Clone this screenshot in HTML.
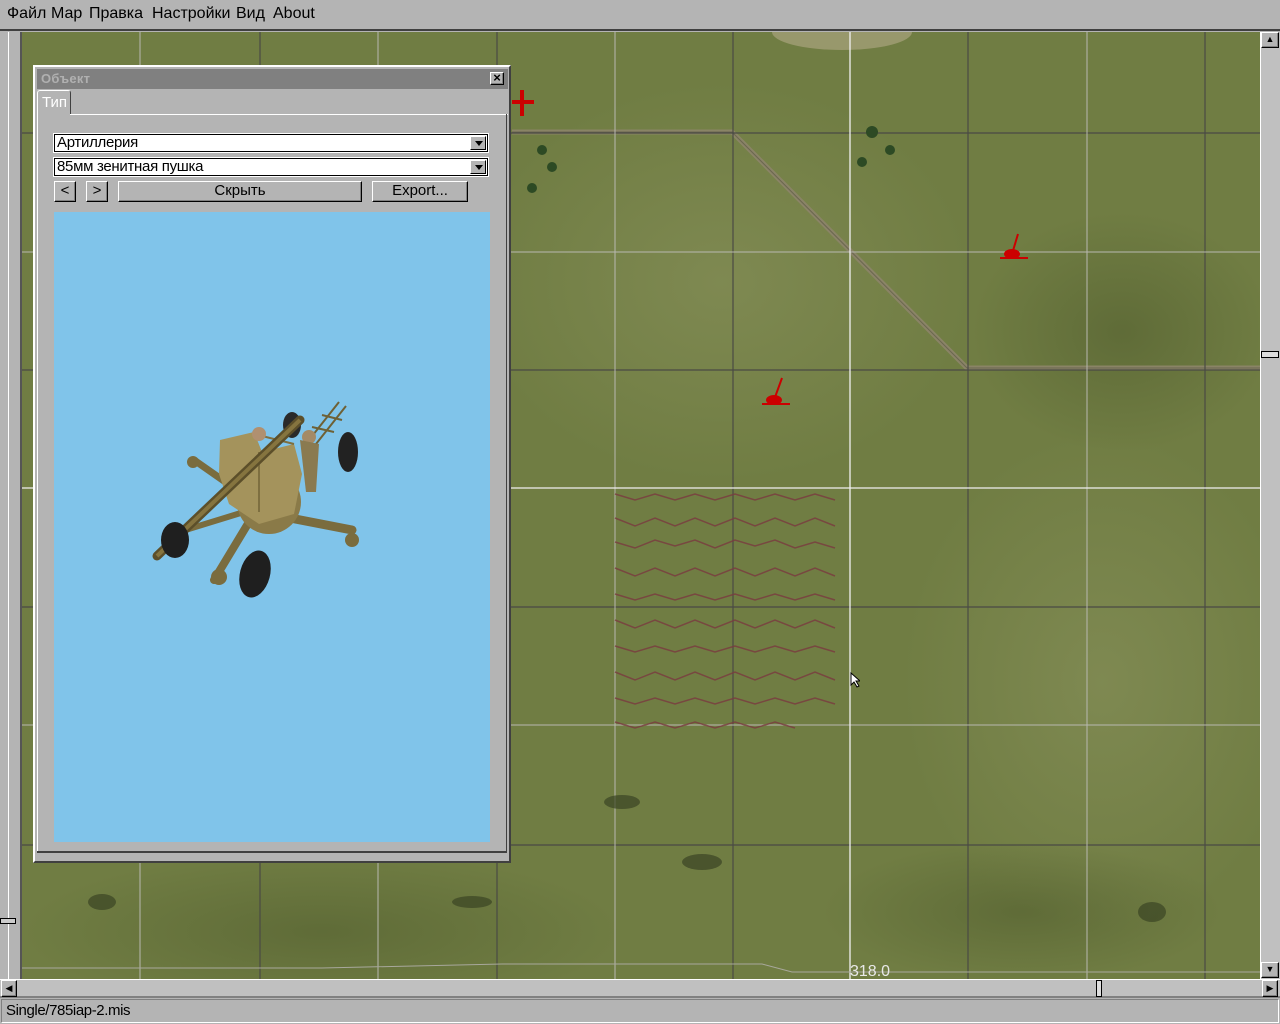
<!DOCTYPE html>
<html><head><meta charset="utf-8"><style>
*{margin:0;padding:0;box-sizing:border-box}
body{width:1280px;height:1024px;overflow:hidden;background:#b4b4b4;font-family:"Liberation Sans",sans-serif;position:relative}
.abs{position:absolute}
.menu{left:0;top:0;width:1280px;height:31px;background:#b4b4b4;border-bottom:2px solid #404040;font-size:16px;color:#000}
.menu span{position:absolute;top:5px}
.map{left:22px;top:32px;width:1239px;height:948px;background:#6f7c42;overflow:hidden}
.btn{background:#b4b4b4;border:1px solid;border-color:#fff #000 #000 #fff;box-shadow:inset -1px -1px 0 #808080;font-size:15px;text-align:center;line-height:17px;color:#000}
.combo{background:#fff;border:1px solid #000;box-shadow:0 0 0 1px #fff;font-size:15px;line-height:16px;padding-left:2px;letter-spacing:-0.3px}
.arr{position:absolute;right:1px;top:1px;width:16px;height:14px;background:#b4b4b4;border:1px solid;border-color:#fff #000 #000 #fff}
.arr:after{content:"";position:absolute;left:4px;top:4px;border-left:4px solid transparent;border-right:4px solid transparent;border-top:5px solid #000}
</style></head><body>
<div class="abs menu"><span style="left:7px">Файл</span><span style="left:51px">Мар</span><span style="left:89px">Правка</span><span style="left:152px">Настройки</span><span style="left:236px">Вид</span><span style="left:273px">About</span></div>
<div class="abs" style="left:8px;top:32px;width:1px;height:950px;background:#fff"></div>
<div class="abs" style="left:20px;top:32px;width:2px;height:950px;background:#555"></div>
<div class="abs" style="left:0;top:918px;width:16px;height:6px;border:1px solid #000;background:#ccc"></div>
<div class="abs map">
<svg width="1239" height="948" style="position:absolute;left:0;top:0">
<defs>
<radialGradient id="g1"><stop offset="0" stop-color="#8d9560" stop-opacity=".5"/><stop offset="1" stop-color="#8d9560" stop-opacity="0"/></radialGradient>
<radialGradient id="g2"><stop offset="0" stop-color="#4e5a2c" stop-opacity=".5"/><stop offset="1" stop-color="#4e5a2c" stop-opacity="0"/></radialGradient>
</defs>
<rect width="1239" height="948" fill="#707d43"/>
<ellipse cx="820" cy="0" rx="70" ry="18" fill="#a9a47e" opacity=".7"/>
<ellipse cx="700" cy="250" rx="250" ry="200" fill="url(#g1)"/>
<ellipse cx="1080" cy="650" rx="200" ry="250" fill="url(#g1)"/>
<ellipse cx="300" cy="900" rx="300" ry="80" fill="url(#g2)"/>
<ellipse cx="1100" cy="300" rx="150" ry="120" fill="url(#g2)"/>
<ellipse cx="1000" cy="880" rx="200" ry="70" fill="url(#g2)"/>
<path d="M490 100 H710 L945 336 H1239" stroke="#8a8466" stroke-width="5" fill="none"/>
<path d="M490 100 H710 L945 336 H1239" stroke="#6b6650" stroke-width="1" fill="none"/>
<g stroke="#4a4a44" stroke-width="1.2"><line x1="711" y1="0" x2="711" y2="948"/><line x1="946" y1="0" x2="946" y2="948"/><line x1="1183" y1="0" x2="1183" y2="948"/><line x1="0" y1="101" x2="1239" y2="101"/><line x1="0" y1="338" x2="1239" y2="338"/><line x1="0" y1="575" x2="1239" y2="575"/><line x1="0" y1="813" x2="1239" y2="813"/><line x1="238" y1="0" x2="238" y2="948"/><line x1="475" y1="0" x2="475" y2="948"/></g>
<g stroke="#b8b8b0" stroke-width="1"><line x1="593" y1="0" x2="593" y2="948"/><line x1="1065" y1="0" x2="1065" y2="948"/><line x1="0" y1="220" x2="1239" y2="220"/><line x1="0" y1="693" x2="1239" y2="693"/><line x1="118" y1="0" x2="118" y2="948"/><line x1="356" y1="0" x2="356" y2="948"/></g>
<g stroke="#f0f0f0" stroke-width="1.3"><line x1="828" y1="0" x2="828" y2="948"/><line x1="0" y1="456" x2="1239" y2="456"/></g>
<g stroke="#7a3a40" stroke-width="1.5" opacity=".8" fill="none">
<path d="M593 462 l20 6 l20-6 l20 6 l20-6 l20 6 l20-6 l20 6 l20-6 l20 6 l20-6 l20 6"/>
<path d="M593 486 l20 8 l20-8 l20 8 l20-8 l20 8 l20-8 l20 8 l20-8 l20 8 l20-8 l20 8"/>
<path d="M593 510 l20 6 l20-8 l20 6 l20-6 l20 8 l20-8 l20 6 l20-6 l20 8 l20-6 l20 6"/>
<path d="M593 536 l20 8 l20-8 l20 8 l20-8 l20 8 l20-8 l20 8 l20-8 l20 8 l20-8 l20 8"/>
<path d="M593 562 l20 6 l20-6 l20 6 l20-6 l20 6 l20-6 l20 6 l20-6 l20 6 l20-6 l20 6"/>
<path d="M593 588 l20 8 l20-8 l20 8 l20-8 l20 8 l20-8 l20 8 l20-8 l20 8 l20-8 l20 8"/>
<path d="M593 614 l20 6 l20-6 l20 6 l20-6 l20 6 l20-6 l20 6 l20-6 l20 6 l20-6 l20 6"/>
<path d="M593 640 l20 8 l20-8 l20 8 l20-8 l20 8 l20-8 l20 8 l20-8 l20 8 l20-8 l20 8"/>
<path d="M593 666 l20 6 l20-6 l20 6 l20-6 l20 6 l20-6 l20 6 l20-6 l20 6 l20-6 l20 6"/>
<path d="M593 690 l20 6 l20-6 l20 6 l20-6 l20 6 l20-6 l20 6 l20-6 l20 6"/>
</g>
<path d="M0 936 H300 l180-4 H740 l30 8 H1239" stroke="#a8a89c" stroke-width="1" fill="none"/>
<g fill="#c00"><rect x="490" y="68" width="22" height="4"/><rect x="498" y="58" width="4" height="26"/>
<ellipse cx="990" cy="222" rx="8" ry="5"/><rect x="978" y="225" width="28" height="2"/><line x1="990" y1="222" x2="996" y2="202" stroke="#c00" stroke-width="2"/>
<ellipse cx="752" cy="368" rx="8" ry="5"/><rect x="740" y="371" width="28" height="2"/><line x1="752" y1="368" x2="760" y2="346" stroke="#c00" stroke-width="2"/></g>
<g fill="#2d4a24"><circle cx="520" cy="118" r="5"/><circle cx="530" cy="135" r="5"/><circle cx="510" cy="156" r="5"/><circle cx="850" cy="100" r="6"/><circle cx="868" cy="118" r="5"/><circle cx="840" cy="130" r="5"/></g>
<text x="828" y="944" font-family="Liberation Sans" font-size="16" fill="#e8e8e8">318.0</text>
<g fill="#3a4424" opacity=".7"><ellipse cx="80" cy="870" rx="14" ry="8"/><ellipse cx="680" cy="830" rx="20" ry="8"/><ellipse cx="600" cy="770" rx="18" ry="7"/><ellipse cx="1130" cy="880" rx="14" ry="10"/><ellipse cx="450" cy="870" rx="20" ry="6"/></g>
</svg>
</div>
<div class="abs" style="left:1260px;top:32px;width:20px;height:948px;background:#c0c0c0;border-left:1px solid #fff"></div>
<div class="abs btn" style="left:1261px;top:32px;width:18px;height:16px;font-size:9px;line-height:13px">▲</div>
<div class="abs" style="left:1261px;top:351px;width:18px;height:7px;border:1px solid #000;background:#ddd"></div>
<div class="abs btn" style="left:1261px;top:962px;width:18px;height:16px;font-size:9px;line-height:13px">▼</div>
<div class="abs" style="left:0;top:979px;width:1280px;height:19px;background:#c0c0c0;border-top:1px solid #fff;border-bottom:2px solid #808080"></div>
<div class="abs btn" style="left:1px;top:980px;width:16px;height:17px;font-size:9px;line-height:15px">◀</div>
<div class="abs" style="left:1096px;top:980px;width:6px;height:17px;border:1px solid #000;background:#ddd"></div>
<div class="abs btn" style="left:1262px;top:980px;width:16px;height:17px;font-size:9px;line-height:15px">▶</div>
<div class="abs" style="left:1px;top:999px;width:1278px;height:24px;border:1px solid;border-color:#808080 #fff #fff #808080;font-size:15px;padding:2px 4px;letter-spacing:-0.4px">Single/785iap-2.mis</div>
<div class="abs" style="left:33px;top:65px;width:478px;height:798px;background:#b4b4b4;border:2px solid;border-color:#fff #404040 #404040 #fff"></div>
<div class="abs" style="left:37px;top:69px;width:471px;height:20px;background:#808080;color:#b0b0b0;font-weight:bold;font-size:13px;padding:2px 4px;letter-spacing:.3px">Объект</div>
<div class="abs btn" style="left:490px;top:72px;width:14px;height:13px;font-size:13px;line-height:10px;font-weight:bold">×</div>
<div class="abs" style="left:37px;top:90px;width:34px;height:25px;border:1px solid;border-color:#fff #404040 transparent #fff;border-radius:3px 3px 0 0;color:#fff;font-size:15px;padding:3px 4px">Тип</div>
<div class="abs" style="left:70px;top:114px;width:438px;height:1px;background:#fff"></div>
<div class="abs" style="left:37px;top:114px;width:1px;height:738px;background:#fff"></div>
<div class="abs" style="left:506px;top:114px;width:1px;height:738px;background:#404040"></div>
<div class="abs" style="left:37px;top:851px;width:470px;height:2px;background:#404040"></div>
<div class="abs combo" style="left:54px;top:134px;width:434px;height:18px">Артиллерия<div class="arr"></div></div>
<div class="abs combo" style="left:54px;top:158px;width:434px;height:18px">85мм зенитная пушка<div class="arr"></div></div>
<div class="abs btn" style="left:54px;top:181px;width:22px;height:21px">&lt;</div>
<div class="abs btn" style="left:86px;top:181px;width:22px;height:21px">&gt;</div>
<div class="abs btn" style="left:118px;top:181px;width:244px;height:21px">Скрыть</div>
<div class="abs btn" style="left:372px;top:181px;width:96px;height:21px">Export...</div>
<div class="abs" style="left:54px;top:212px;width:436px;height:630px;background:#80c4ea">
<svg width="436" height="630" style="position:absolute;left:0;top:0">
<g stroke="#7a6c3e" stroke-linecap="round">
<line x1="205" y1="300" x2="298" y2="318" stroke-width="9"/>
<line x1="200" y1="290" x2="140" y2="248" stroke-width="7"/>
<line x1="195" y1="310" x2="160" y2="368" stroke-width="8"/>
<line x1="190" y1="300" x2="125" y2="320" stroke-width="6"/>
</g>
<path d="M255 228 L285 190 M262 232 L292 194 M258 215 L280 220 M268 203 L288 208" stroke="#6e6136" stroke-width="2"/>
<ellipse cx="238" cy="213" rx="9" ry="13" fill="#2a2a2a"/>
<ellipse cx="294" cy="240" rx="10" ry="20" fill="#222"/>
<circle cx="215" cy="290" r="32" fill="#8a7a48"/>
<path d="M166 228 L200 220 L208 240 L240 232 L248 262 L240 302 L205 312 L175 292 L165 262 Z" fill="#a4935c"/>
<path d="M200 222 L240 232 M205 240 L205 300" stroke="#7e6f40" stroke-width="2"/>
<circle cx="205" cy="222" r="7" fill="#b09070"/><circle cx="255" cy="225" r="7" fill="#a48a66"/>
<path d="M246 228 L252 280 L262 280 L265 232 Z" fill="#8a7a50"/>
<line x1="103" y1="344" x2="246" y2="208" stroke="#5c4f2a" stroke-width="9" stroke-linecap="round"/>
<line x1="103" y1="344" x2="246" y2="208" stroke="#85743f" stroke-width="4"/>
<ellipse cx="121" cy="328" rx="14" ry="18" fill="#1f1f1f"/>
<ellipse cx="201" cy="362" rx="15" ry="24" fill="#1f1f1f" transform="rotate(15 201 362)"/>
<circle cx="165" cy="365" r="8" fill="#7a6c3e"/><circle cx="298" cy="328" r="7" fill="#7a6c3e"/><circle cx="139" cy="250" r="6" fill="#7a6c3e"/>
</svg>
</div>
<svg class="abs" style="left:850px;top:672px" width="10" height="16"><path d="M1 1 L1 13 L4 10 L7 15 L9 14 L6 9 L10 9 Z" fill="#fff" stroke="#000" stroke-width="1"/></svg>
</body></html>
